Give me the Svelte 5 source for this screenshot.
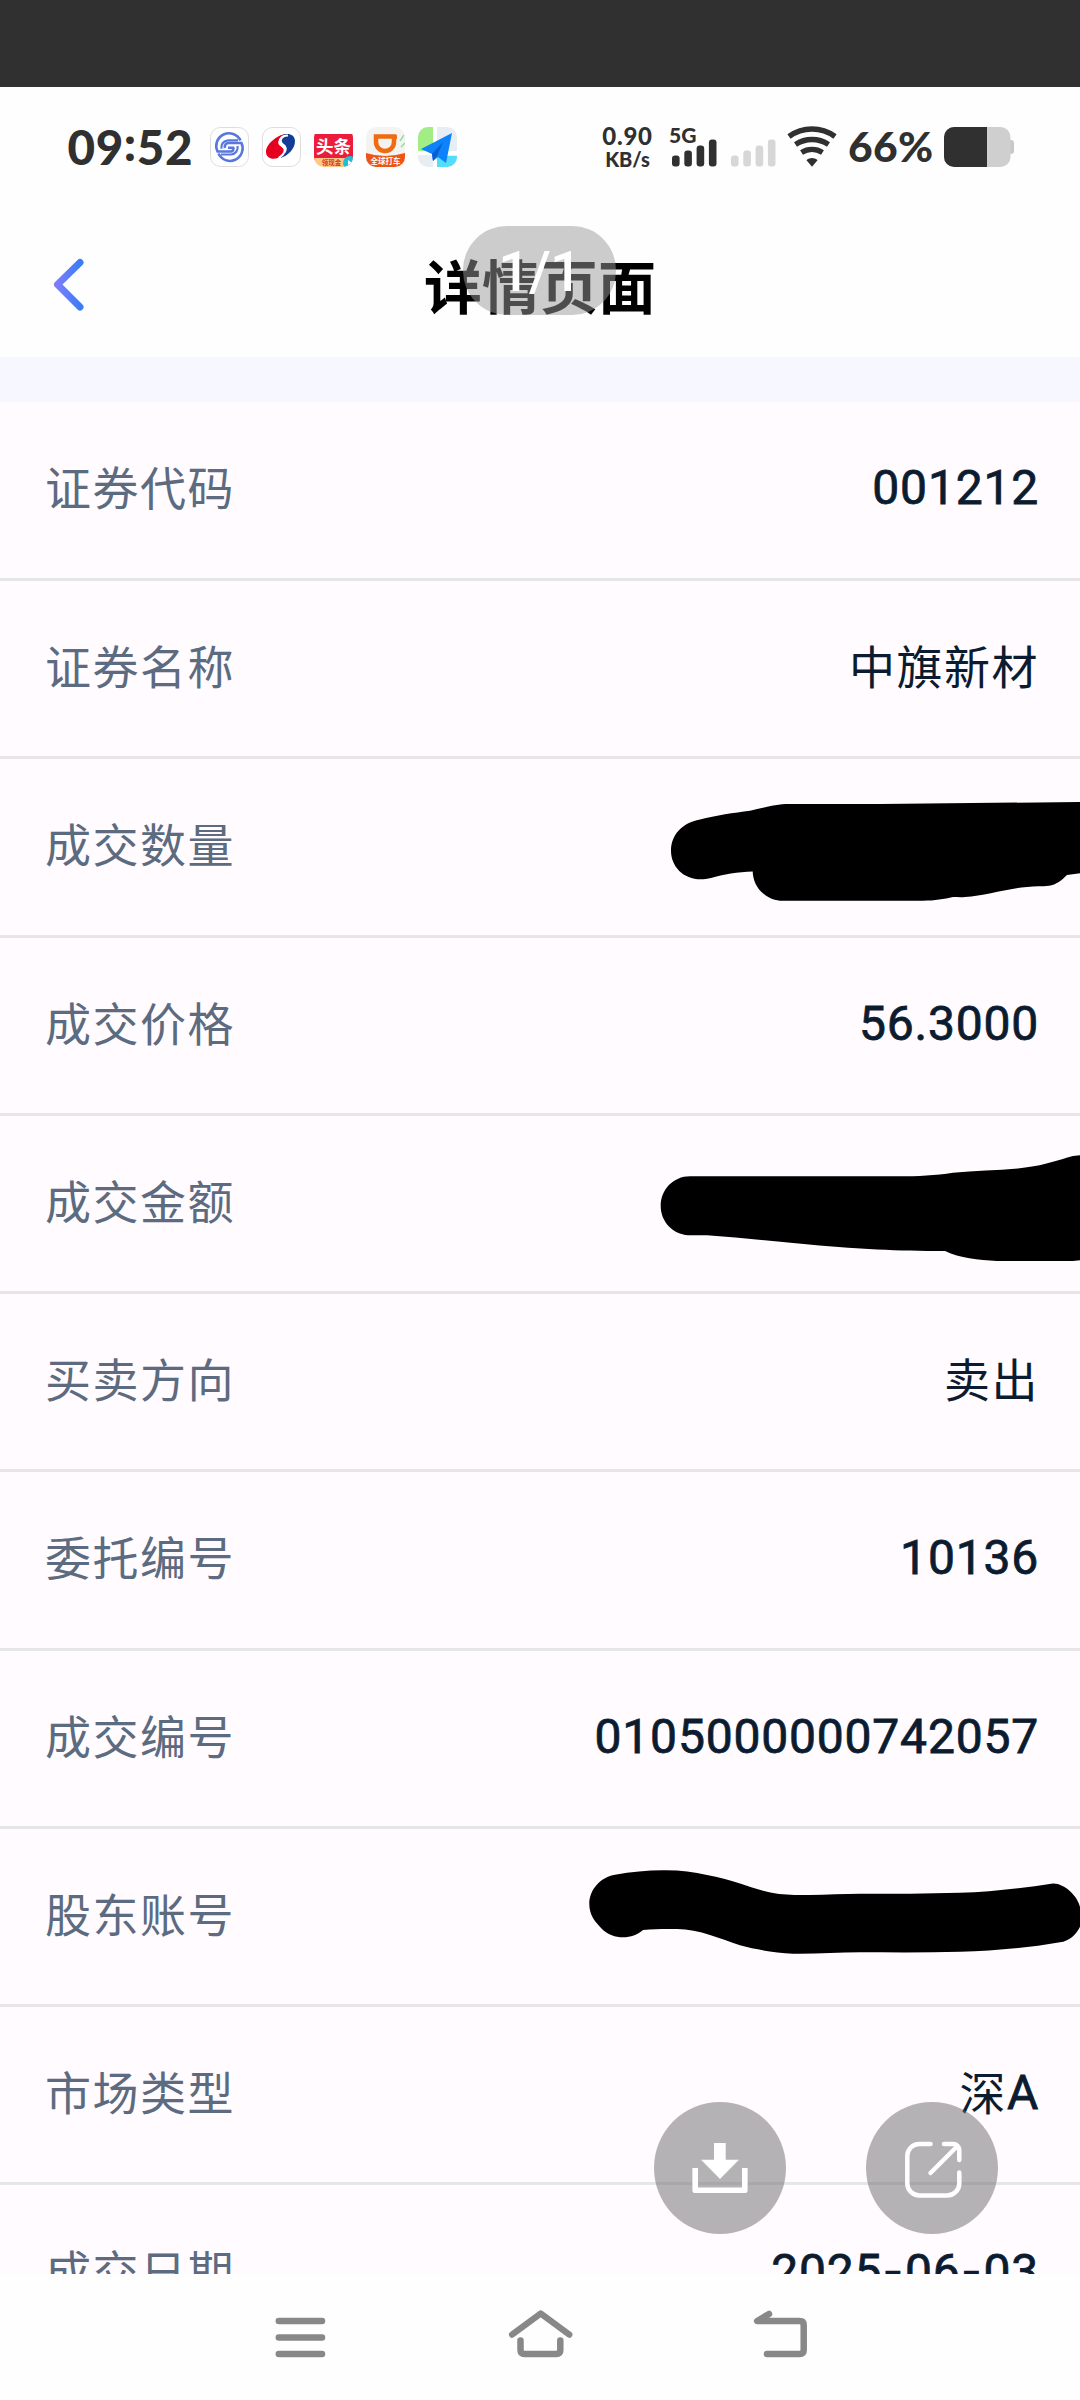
<script lang="ts">
  type Row = {
    label: string;
    value?: string;
    scribble?: { viewBox: string; d: string };
  };

  const rows: Row[] = [
    { label: "证券代码", value: "001212" },
    { label: "证券名称", value: "中旗新材" },
    {
      label: "成交数量",
      scribble: {
        viewBox: "560 759 520 176",
        d: "M671 851C671 835 682 823 700 819.6C716 815 734 813 750 810.7C764 808 774 804 790 804L880 804L1080 802V873.2L1067 875C1062 880 1056 885 1049 885.7C1042 886.5 1035 886 1027 887C1004 889 985 896 965 897C960 897.5 957 897 953 897C944 899 935 900.7 923 900.7H780C764 899 753 886 752.7 871.4C738 872 723 874 711 878C688 884 671 869 671 851Z",
      },
    },
    { label: "成交价格", value: "56.3000" },
    {
      label: "成交金额",
      scribble: {
        viewBox: "560 1116 520 176",
        d: "M660.7 1206C660.7 1190 673 1176.3 690 1176.3H893C915 1176.5 934 1175.5 953 1172.7C978 1170 1003 1171 1027 1167.3C1045 1165 1058 1160 1073 1156L1080 1155.3V1260.3L1073 1261H997C978 1260 960 1258 945 1251C920 1251 900 1250.5 877 1249.5C820 1247 763 1239 707 1235.3H688C673 1234 660.7 1222 660.7 1206Z",
      },
    },
    { label: "买卖方向", value: "卖出" },
    { label: "委托编号", value: "10136" },
    { label: "成交编号", value: "0105000000742057" },
    {
      label: "股东账号",
      scribble: {
        viewBox: "560 1829 520 176",
        d: "M589.3 1904C589.3 1889 601 1877 615 1874.7C631 1872 647 1870.3 663 1870.3C679 1870 693 1872 707 1875C719 1877 729 1880 740 1883.5C753 1888 765 1892 779 1894C789 1895 800 1895 810 1895C827 1894.7 843 1893.7 860 1893.7C893 1893.7 927 1893.7 960 1892.7C991 1892 1023 1888 1053 1883.4C1064 1883 1078 1896 1080 1907V1926.7C1076 1935 1069 1941 1060 1942.3C1027 1948 993 1951 960 1951.7C927 1952.7 893 1952.3 860 1952.3C838 1952.5 816 1954 793 1953.7C775 1952.5 757 1950 740 1945.3C730 1942 720 1938 710 1935C699 1931 688 1929.5 677 1929C665 1928.7 654 1929 643 1930C637 1935 631 1937.3 623 1937.3C615 1937.3 608 1934.5 603 1930C595 1922 589.3 1915 589.3 1904Z",
      },
    },
    { label: "市场类型", value: "深A" },
    { label: "成交日期", value: "2025-06-03" },
  ];

  const signal_bars = [11, 16, 21, 27];

  // hanzi, dashes and latin/digits are each set in their own face
  function split_runs(value: string) {
    return value.match(/[一-龥]+|-|[\w.]+/g) ?? [];
  }

  function run_kind(run: string) {
    if (run === "-") return "dash";
    return /[一-龥]/.test(run) ? "hanzi" : "latin";
  }
</script>

<main class="Screen">
  <div class="Screen__cutout"></div>

  <div class="StatusBar">
    <span class="StatusBar__time">09<i>:</i>52</span>

    <div class="StatusBar__apps">
      <svg viewBox="0 0 39 40">
        <rect x=".5" y=".5" width="38" height="39" rx="10" fill="#fff" stroke="#ddd" />
        <g fill="none" stroke="#5878dc" stroke-width="2.6">
          <path d="M30.500 13.500A12.500 12.500 0 0 0 7.500 24.500H20.500a2.800 2.800 0 0 0 2.800-3.800H18" />
          <path d="M8.500 26.500A12.500 12.500 0 0 0 31.500 16H18.500a3.800 3.800 0 0 0-3.500 5" />
          <path d="M28 13.300H18a7 7 0 0 0-6.500 8.500" stroke-width="2.200" />
          <path d="M11 27.500H21a7 7 0 0 0 6.500-8.500" stroke-width="2.200" />
        </g>
      </svg>
      <svg viewBox="0 0 39 40">
        <rect x=".5" y=".5" width="38" height="39" rx="10" fill="#fff" stroke="#ddd" />
        <path d="M24 7C15 8 4 17 4 25c0 6 6 8 12 6 8-2 9-7 5-10-4-3-6-4-4-8 1-3 4-5 7-6Z" fill="#e60020" />
        <path d="M18 9C25 5 33 7 33 14c0 8-7 15-15 17 7-5 9-10 4-14-3-2-4-6 4-9-3 0-5 0-8 1Z" fill="#123c96" />
        <path d="M26 8.500C17 9 16 15 20 18.500S24 26 16.500 31" fill="none" stroke="#fff" stroke-width="2" />
      </svg>
      <svg viewBox="0 0 39 40">
        <defs><clipPath id="news"><rect width="39" height="40" rx="10" /></clipPath></defs>
        <g clip-path="url(#news)">
          <rect width="39" height="40" fill="#fff" />
          <rect y="7" width="39" height="26" fill="#ee1c3c" />
          <rect y="31" width="39" height="9" fill="#ffc884" />
          <circle cx="36" cy="36" r="7" fill="#21bdd8" />
          <path d="M34 33l4 3-4 2z" fill="#fff" />
        </g>
        <text x="19.500" y="26" font-size="17.500" fill="#fff">头条</text>
        <text x="17.500" y="38" font-size="6.500" fill="#d33c20">领现金</text>
      </svg>
      <svg viewBox="0 0 39 40">
        <defs><clipPath id="ride"><rect width="39" height="40" rx="10" /></clipPath></defs>
        <g clip-path="url(#ride)">
          <rect width="39" height="40" fill="#f5f3f2" />
          <path d="M0 26Q19 32 39 26V40H0Z" fill="#ee5414" />
          <path d="M34 14l4-6M35 20l4-4" stroke="#8fe0a0" stroke-width="1.500" />
        </g>
        <path d="M10 9.500H28V15a9 9 0 0 1-18 0Z" fill="none" stroke="#f06a10" stroke-width="4.500" />
        <rect x="28" y="8" width="3" height="4" fill="#f06a10" />
        <text x="19.500" y="36.500" font-size="7.500" fill="#fff">全球打车</text>
      </svg>
      <svg viewBox="0 0 39 40">
        <defs><clipPath id="map"><rect width="39" height="40" rx="10" /></clipPath></defs>
        <g clip-path="url(#map)">
          <rect width="39" height="40" fill="#e6eef4" />
          <rect width="15" height="25" fill="#a0ee84" />
          <rect x="19" y="29" width="20" height="11" fill="#54dcfa" />
          <path d="M17 0V40M0 26H39" stroke="#fff" stroke-width="4" />
          <path d="M34 6L3 22l11 5 1 7 5-4 8 6Z" fill="#0c82fb" />
          <path d="M25 15L14 27l1 7 4-5Z" fill="#0a5cd0" />
        </g>
      </svg>
    </div>

    <div class="StatusBar__speed"><b>0.90</b><small>KB/s</small></div>

    <div class="StatusBar__cell">
      <span class="StatusBar__net">5G</span>
      <svg width="46" height="41" viewBox="0 0 46 41" fill="#303030">
        {#each signal_bars as h, i}
          <rect x={i * 12.3} y={40.5 - h} width="7.600" height={h} rx="3" />
        {/each}
      </svg>
    </div>
    <svg width="46" height="41" viewBox="0 0 46 41" fill="#d7d7d7">
      {#each signal_bars as h, i}
        <rect x={i * 12.3} y={40.5 - h} width="7.600" height={h} rx="3" />
      {/each}
    </svg>

    <svg class="StatusBar__wifi" width="50" height="41" viewBox="787 126.500 50 41" fill="none" stroke="#303030" stroke-width="5.400">
      <path d="M789 137A39 39 0 0 1 835 137" />
      <path d="M795.500 145A30 30 0 0 1 828.500 145" />
      <path d="M801.500 153A20 20 0 0 1 822.500 153" />
      <path d="M806.300 160.500Q812 156.500 817.700 160.500L812 167.200Z" fill="#303030" stroke="none" />
    </svg>

    <span class="StatusBar__percent">66%</span>

    <svg class="StatusBar__battery" width="70" height="40" viewBox="0 0 70 40">
      <rect x="60" y="13" width="10" height="14" rx="3" fill="#c8c8c8" />
      <rect width="66.500" height="40" rx="10" fill="#cfcfcf" />
      <path d="M10 0H43V40H10A10 10 0 0 1 0 30V10A10 10 0 0 1 10 0Z" fill="#303030" />
    </svg>
  </div>

  <header class="TitleBar">
    <svg class="TitleBar__back" width="34" height="56" viewBox="52 257 34 56">
      <defs>
        <linearGradient id="back" x1="0" x2="1" y1="0" y2="0">
          <stop offset="0" stop-color="#7b7dfc" />
          <stop offset="1" stop-color="#3c7cf8" />
        </linearGradient>
      </defs>
      <path d="M80 262.500L57.500 284.500L80 307" fill="none" stroke="url(#back)" stroke-width="7" stroke-linecap="round" stroke-linejoin="round" />
    </svg>
    <h1 class="TitleBar__title">详情页面</h1>
    <span class="TitleBar__page">1/1</span>
  </header>

  <section class="Details">
    {#each rows as row}
      <div class="Details__row">
        <span class="Details__label">{row.label}</span>
        {#if row.value}
          <span class="Details__value">
            {#each split_runs(row.value) as run}<span class={run_kind(run)}>{run}</span>{/each}
          </span>
        {:else if row.scribble}
          <svg class="Details__scribble" viewBox={row.scribble.viewBox}><path d={row.scribble.d} /></svg>
        {/if}
      </div>
    {/each}
  </section>

  <div class="Actions">
    <button type="button" class="Actions__button" aria-label="下载">
      <svg viewBox="654 2102 132 132" fill="#fff">
        <path d="M714 2143H725.700V2159.700H739L720 2179L701 2159.700H714Z" />
        <path d="M695.200 2168V2190.200H744.800V2168" fill="none" stroke="#fff" stroke-width="5.600" stroke-linejoin="round" />
      </svg>
    </button>
    <button type="button" class="Actions__button" aria-label="分享">
      <svg viewBox="866 2102 132 132" fill="none" stroke="#fff" stroke-width="4.500" stroke-linecap="round">
        <path d="M930.500 2144H919.300A12 12 0 0 0 907.300 2156V2183.400A12 12 0 0 0 919.300 2195.400H947.300A12 12 0 0 0 959.300 2183.400V2172.500" />
        <path d="M944 2144H953.300A6 6 0 0 1 959.300 2150V2160M956.500 2147L930.500 2173" />
      </svg>
    </button>
  </div>

  <nav class="NavBar">
    <svg viewBox="265 2305 70 60">
      <path d="M278.800 2321H322M278.800 2337.500H322M278.800 2354H322" />
    </svg>
    <svg viewBox="505 2305 70 60">
      <path d="M512.200 2334.500L540.700 2313.500L569.200 2334.500M520.500 2340.500V2350Q520.500 2354 524.500 2354H556.300Q560.300 2354 560.300 2350V2340.500" />
    </svg>
    <svg viewBox="745 2305 70 60">
      <path d="M769 2314L757.200 2321H799.700Q803.700 2321 803.700 2325V2350Q803.700 2354 799.700 2354H767" />
    </svg>
  </nav>
</main>

<style>
  :global(body) {
    background: #fefefe;
  }

  .Screen {
    position: relative;
    display: flex;
    flex-direction: column;
    width: 1080px;
    height: 2400px;
    overflow: hidden;
    background: #fefefe;
    font-family: Roboto, "Noto Sans CJK SC", sans-serif;
  }

  .Screen__cutout {
    flex: none;
    height: 87px;
    background: #303030;
  }

  .StatusBar {
    flex: none;
    display: flex;
    align-items: flex-start;
    height: 103px;
    padding: 39px 0 0 67.5px;
    box-sizing: border-box;
    color: #303030;
    font-family: Lato, sans-serif;
    font-weight: 900;
    white-space: nowrap;
  }

  .StatusBar svg {
    flex: none;
    display: block;
  }

  .StatusBar__time {
    width: 142.5px;
    font-size: 47.5px;
    line-height: 42px;
    letter-spacing: 0.6px;
  }

  .StatusBar__time i {
    position: relative;
    top: -4px;
    font-style: normal;
  }

  .StatusBar__apps {
    display: flex;
    gap: 13px;
    width: 391px;
    padding-top: 1px;
  }

  .StatusBar__apps svg {
    width: 39px;
    height: 40px;
  }

  .StatusBar__apps text {
    font-family: "Noto Sans CJK SC", sans-serif;
    font-weight: 700;
    text-anchor: middle;
  }

  .StatusBar__speed {
    display: flex;
    flex-direction: column;
    align-items: center;
    width: 53px;
    margin-right: 18px;
  }

  .StatusBar__speed b {
    font-size: 24px;
    font-weight: 900;
    line-height: 19px;
    letter-spacing: 0.8px;
  }

  .StatusBar__speed small {
    font-size: 20px;
    line-height: 28px;
  }

  .StatusBar__cell {
    position: relative;
    width: 59px;
  }

  .StatusBar__net {
    position: absolute;
    left: -3px;
    top: -1px;
    font-size: 21px;
    line-height: 19px;
  }

  .StatusBar__wifi {
    margin-left: 10px;
  }

  .StatusBar__percent {
    width: 96px;
    margin-left: 11px;
    font-size: 42.5px;
    line-height: 40px;
    letter-spacing: 0.3px;
  }

  .StatusBar__battery {
    margin-top: 1px;
  }

  .TitleBar {
    position: relative;
    flex: none;
    display: flex;
    align-items: center;
    height: 167px;
    padding: 0 52px;
    border-bottom: 45px solid #f6f7ff;
  }

  .TitleBar__back {
    margin-top: 22px;
  }

  .TitleBar__title {
    flex: 1;
    margin: 30px 34px 0 0;
    color: #000;
    font-size: 58px;
    font-weight: 700;
    line-height: 60px;
    text-align: center;
  }

  .TitleBar__page {
    position: absolute;
    left: 463px;
    top: 36px;
    width: 153px;
    height: 89px;
    border-radius: 44px;
    background: rgba(153, 153, 153, 0.5);
    color: #fff;
    font-size: 56px;
    font-weight: 500;
    line-height: 93px;
    letter-spacing: -1px;
    text-align: center;
  }

  .Details {
    flex: 1;
    min-height: 0;
    overflow: hidden;
    background: #fffbff;
  }

  .Details__row {
    position: relative;
    display: flex;
    align-items: baseline;
    justify-content: space-between;
    height: 178.25px;
    padding: 0 41px 0 45px;
    box-sizing: border-box;
    border-bottom: 3px solid #e7e6e7;
    font-size: 46px;
    line-height: 174px;
    letter-spacing: 1.5px;
  }

  .Details__row:first-child {
    height: 179px;
  }

  .Details__label {
    color: #5c6b80;
  }

  .Details__value {
    color: #0c1c30;
  }

  .latin {
    position: relative;
    top: -1px;
    font-size: 48px;
    letter-spacing: 0.8px;
    -webkit-text-stroke: 0.8px #0c1c30;
  }

  .dash {
    position: relative;
    top: -2px;
    font-family: Inter, sans-serif;
    font-weight: 500;
  }

  .Details__scribble {
    position: absolute;
    right: 0;
    top: 0;
    width: 520px;
    height: 176px;
  }

  .Actions {
    position: absolute;
    left: 654px;
    top: 2102px;
    display: flex;
    gap: 80px;
  }

  .Actions__button {
    width: 132px;
    height: 132px;
    padding: 0;
    border: 0;
    border-radius: 50%;
    background: rgba(106, 106, 106, 0.5);
  }

  .Actions__button svg {
    display: block;
  }

  .NavBar {
    flex: none;
    display: flex;
    gap: 170px;
    height: 126px;
    padding: 31px 265px 0;
    box-sizing: border-box;
  }

  .NavBar svg {
    width: 70px;
    height: 60px;
    fill: none;
    stroke: #888;
    stroke-width: 6.5px;
    stroke-linecap: round;
    stroke-linejoin: round;
  }
</style>
